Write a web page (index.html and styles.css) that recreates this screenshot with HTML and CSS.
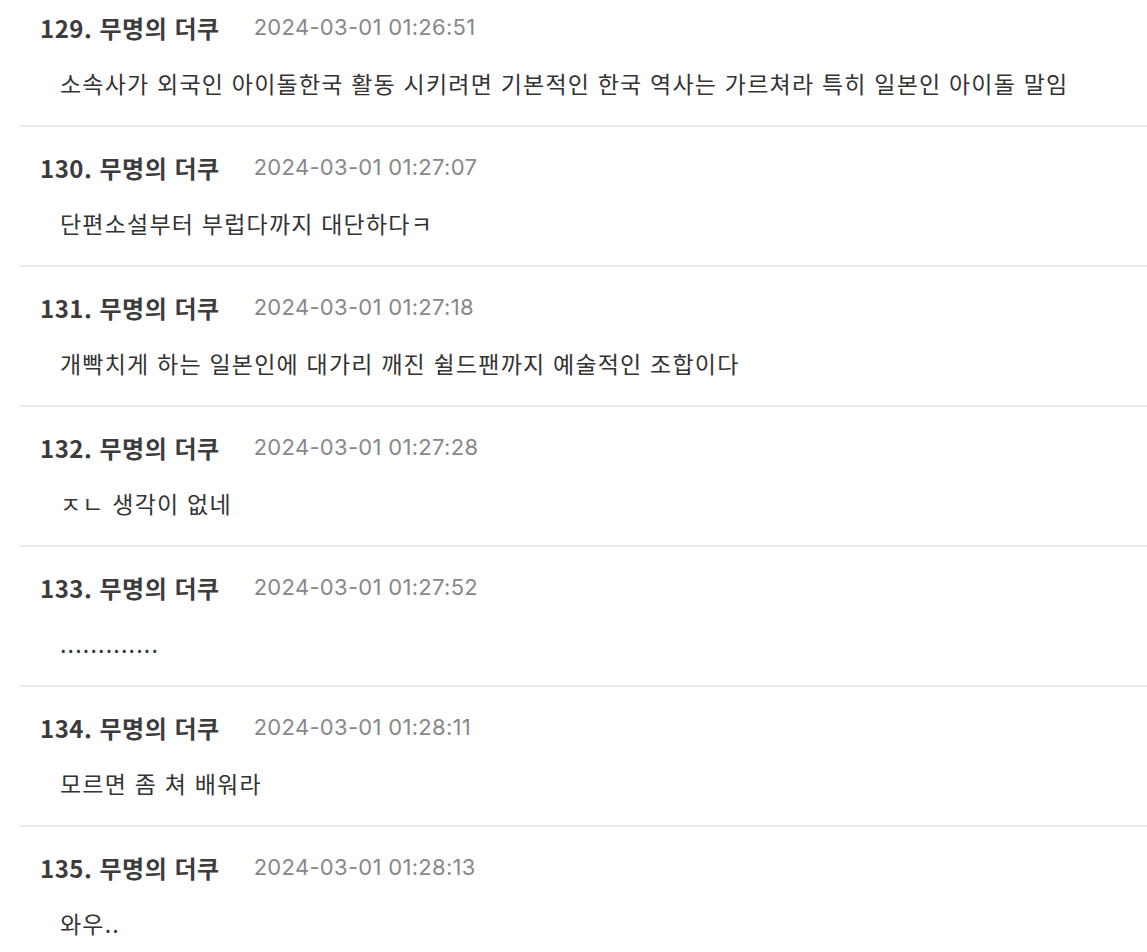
FILE: index.html
```html
<!DOCTYPE html>
<html lang="ko">
<head>
<meta charset="utf-8">
<link rel="stylesheet" href="styles.css">
</head>
<body>
<ul class="comments">
  <li class="comment">
    <div class="meta"><span class="author">129. 무명의 더쿠</span><span class="date">2024-03-01 01:26:51</span></div>
    <p class="text">소속사가 외국인 아이돌한국 활동 시키려면 기본적인 한국 역사는 가르쳐라 특히 일본인 아이돌 말임</p>
  </li>
  <li class="comment">
    <div class="meta"><span class="author">130. 무명의 더쿠</span><span class="date">2024-03-01 01:27:07</span></div>
    <p class="text">단편소설부터 부럽다까지 대단하다ㅋ</p>
  </li>
  <li class="comment">
    <div class="meta"><span class="author">131. 무명의 더쿠</span><span class="date">2024-03-01 01:27:18</span></div>
    <p class="text">개빡치게 하는 일본인에 대가리 깨진 쉴드팬까지 예술적인 조합이다</p>
  </li>
  <li class="comment">
    <div class="meta"><span class="author">132. 무명의 더쿠</span><span class="date">2024-03-01 01:27:28</span></div>
    <p class="text">ㅈㄴ 생각이 없네</p>
  </li>
  <li class="comment">
    <div class="meta"><span class="author">133. 무명의 더쿠</span><span class="date">2024-03-01 01:27:52</span></div>
    <p class="text">.............</p>
  </li>
  <li class="comment">
    <div class="meta"><span class="author">134. 무명의 더쿠</span><span class="date">2024-03-01 01:28:11</span></div>
    <p class="text">모르면 좀 쳐 배워라</p>
  </li>
  <li class="comment">
    <div class="meta"><span class="author">135. 무명의 더쿠</span><span class="date">2024-03-01 01:28:13</span></div>
    <p class="text">와우..</p>
  </li>
</ul>
</body>
</html>
```
FILE: styles.css
```css
html, body {
  margin: 0;
  padding: 0;
  background: #fff;
  overflow: hidden;
}
body {
  font-family: "Noto Sans CJK KR", "Noto Sans", sans-serif;
  color: #333;
}
.comments {
  list-style: none;
  margin: -13px 0 0 20px;
  padding: 0;
}
.comment {
  height: 138px;
  border-bottom: 2px solid #ececec;
  padding: 0 20px;
  display: flex;
  flex-direction: column;
}
.meta {
  height: 40px;
  margin-top: 20px;
  display: flex;
  align-items: center;
  gap: 34px;
}
.author {
  font-size: 24px;
  font-weight: 700;
  color: #3c3c3c;
  letter-spacing: 0.5px;
}
.date {
  font-family: "Inter", "Noto Sans", sans-serif;
  font-size: 22px;
  color: #888;
  letter-spacing: 0.3px;
}
.text {
  margin: 16px 0 0 20px;
  height: 40px;
  line-height: 40px;
  font-size: 23px;
  letter-spacing: 1.2px;
  color: #333;
}
```
